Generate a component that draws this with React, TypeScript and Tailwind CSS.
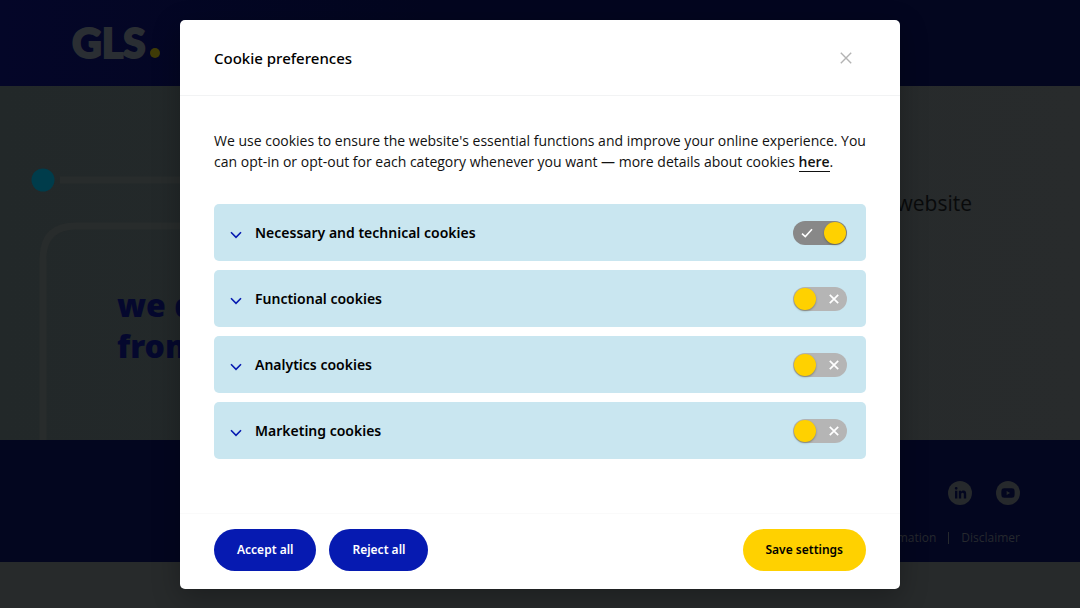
import { useState } from "react";
import { FaLinkedinIn, FaYoutube } from "react-icons/fa";

const categories = [
  { id: "necessary", label: "Necessary and technical cookies", locked: true },
  { id: "functional", label: "Functional cookies", locked: false },
  { id: "analytics", label: "Analytics cookies", locked: false },
  { id: "marketing", label: "Marketing cookies", locked: false },
];

function Toggle({ id, locked }: { id: string; locked: boolean }) {
  const [on, setOn] = useState(locked);
  return (
    <span className="relative flex h-6 w-[54px] shrink-0">
      <input
        id={id}
        type="checkbox"
        checked={on}
        onChange={() => !locked && setOn(!on)}
        className="h-6 w-full cursor-pointer appearance-none rounded-full bg-[#b5b5b5] checked:bg-[#888888]"
      />
      <span
        className={
          on
            ? "pointer-events-none absolute top-px right-px size-[22px] rounded-full bg-[#ffd100] shadow-[0_1px_2px_rgba(24,32,3,0.36)]"
            : "pointer-events-none absolute top-px left-px size-[22px] rounded-full bg-[#ffd100] shadow-[0_1px_2px_rgba(24,32,3,0.36)]"
        }
      />
      {on ? (
        <svg viewBox="0 0 12 12" className="pointer-events-none absolute top-1.5 left-2 size-3" fill="none" stroke="#fff" strokeWidth="1.6">
          <path d="M1 6.6 4.3 9.6 11 2.2" />
        </svg>
      ) : (
        <svg viewBox="0 0 12 12" className="pointer-events-none absolute top-1.5 right-[7px] size-3" fill="none" stroke="#fff" strokeWidth="1.7">
          <path d="M1.8 1.8 10.2 10.2M10.2 1.8 1.8 10.2" />
        </svg>
      )}
    </span>
  );
}

function Backdrop() {
  return (
    <div className="flex min-h-screen flex-col bg-[#272a2b]">
      <header className="flex h-[86px] items-center bg-[#03061f] bg-linear-to-r from-[#040628] to-[#03061f] to-40% px-[72px]">
        <a href="#" aria-label="GLS" className="flex items-end text-[#2a2e33]">
          <span className="font-['Lato'] text-[41px] leading-[40px] font-black [-webkit-text-stroke:2px_#2a2e33]">GLS</span>
          <span className="mb-[5px] ml-1 size-2.5 rounded-full bg-[#403c08]" />
        </a>
      </header>
      <main className="relative flex h-[354px] items-start justify-between bg-linear-to-r from-[#222829] to-[#282b2c] pr-[108px] pl-[117px]">
        <svg className="absolute top-0 left-0 h-full w-[220px]" viewBox="0 0 220 354" fill="none" aria-hidden="true">
          <circle cx="43" cy="94" r="11.5" fill="#003c4b" />
          <path d="M60 94H220M43 354V173Q43 140 76 140H220" stroke="#282c2c" strokeWidth="7" />
        </svg>
        <p className="relative mt-[198px] font-['Noto_Sans'] text-[32px] leading-[41px] font-black text-[#05082e]">
          we d
          <br />
          from
        </p>
        <p className="mt-[101px] text-[21px] leading-8 text-[#090a0b]">website</p>
      </main>
      <footer className="flex h-[122px] flex-col items-end bg-[#03061f] px-[60px] pt-[41px] text-xs text-[#26292e]">
        <div className="flex gap-6">
          <a href="#" aria-label="LinkedIn" className="flex size-6 items-center justify-center rounded-full bg-[#26292c] text-[#03061f]">
            <FaLinkedinIn size={13} />
          </a>
          <a href="#" aria-label="YouTube" className="flex size-6 items-center justify-center rounded-full bg-[#26292c] text-[#03061f]">
            <FaYoutube size={14} />
          </a>
        </div>
        <nav className="mt-[23px] flex items-center gap-3 leading-5">
          <a href="#">Information</a>
          <span className="h-3 w-px bg-[#26292e]" />
          <a href="#">Disclaimer</a>
        </nav>
      </footer>
    </div>
  );
}

export default function App() {
  const [open, setOpen] = useState(true);
  const close = () => setOpen(false);
  return (
    <div className="relative overflow-hidden font-['Open_Sans','Noto_Sans',sans-serif]">
      <Backdrop />
      {open && (
        <div className="absolute inset-0 flex items-start justify-center p-5">
          <div
            role="dialog"
            aria-labelledby="cookie-title"
            className="w-full max-w-[720px] rounded-[5px] bg-white text-black shadow-[0_8px_28px_rgba(2,2,3,0.28)]"
          >
            <div className="flex h-[76px] items-center justify-between border-b border-[#f2f3f4] pr-[46px] pl-[34px]">
              <h2 id="cookie-title" className="font-['Noto_Sans'] text-[15px] leading-6 font-medium">
                Cookie preferences
              </h2>
              <button type="button" aria-label="Close" onClick={close} className="flex size-4 cursor-pointer items-center justify-center">
                <svg viewBox="0 0 12 12" className="size-3" fill="none" stroke="#b3b3b3" strokeWidth="1.4">
                  <path d="M.8.8 11.2 11.2M11.2.8.8 11.2" />
                </svg>
              </button>
            </div>

            <div className="px-[34px] pt-[34px] pb-[54px]">
              <p className="text-[14px] leading-[21px] text-[#111]">
                We use cookies to ensure the website's essential functions and improve your online experience. You can
                opt-in or opt-out for each category whenever you want — more details about cookies{" "}
                <a href="#" className="border-b border-[#111] font-semibold">
                  here
                </a>
                .
              </p>
              <ul className="mt-8 flex flex-col gap-[9px]">
                {categories.map((c) => (
                  <li key={c.id} className="flex h-[57px] items-center rounded-[5px] bg-[#c9e6f0] pr-[19px] pl-4">
                    <button type="button" aria-label={"Show " + c.label} className="mt-1 flex w-3 cursor-pointer">
                      <svg viewBox="0 0 12 8" className="h-2 w-3" fill="none" stroke="#061ab1" strokeWidth="1.6">
                        <path d="M1 1.2 6 6.4 11 1.2" />
                      </svg>
                    </button>
                    <label htmlFor={c.id} className="ml-[13px] flex-1 font-['Noto_Sans'] text-[14px] leading-6 font-semibold">
                      {c.label}
                    </label>
                    <Toggle id={c.id} locked={c.locked} />
                  </li>
                ))}
              </ul>
            </div>

            <div className="flex items-center gap-[13px] border-t border-[#fafafa] px-[34px] pt-[15px] pb-[18px] font-['Noto_Sans'] text-xs font-semibold">
              <button type="button" onClick={close} className="h-[42px] cursor-pointer rounded-full bg-[#061ab1] px-[23px] text-white">
                Accept all
              </button>
              <button type="button" onClick={close} className="h-[42px] cursor-pointer rounded-full bg-[#061ab1] px-[23px] text-white">
                Reject all
              </button>
              <button type="button" onClick={close} className="ml-auto h-[42px] cursor-pointer rounded-full bg-[#ffd100] px-[23px]">
                Save settings
              </button>
            </div>
          </div>
        </div>
      )}
    </div>
  );
}
